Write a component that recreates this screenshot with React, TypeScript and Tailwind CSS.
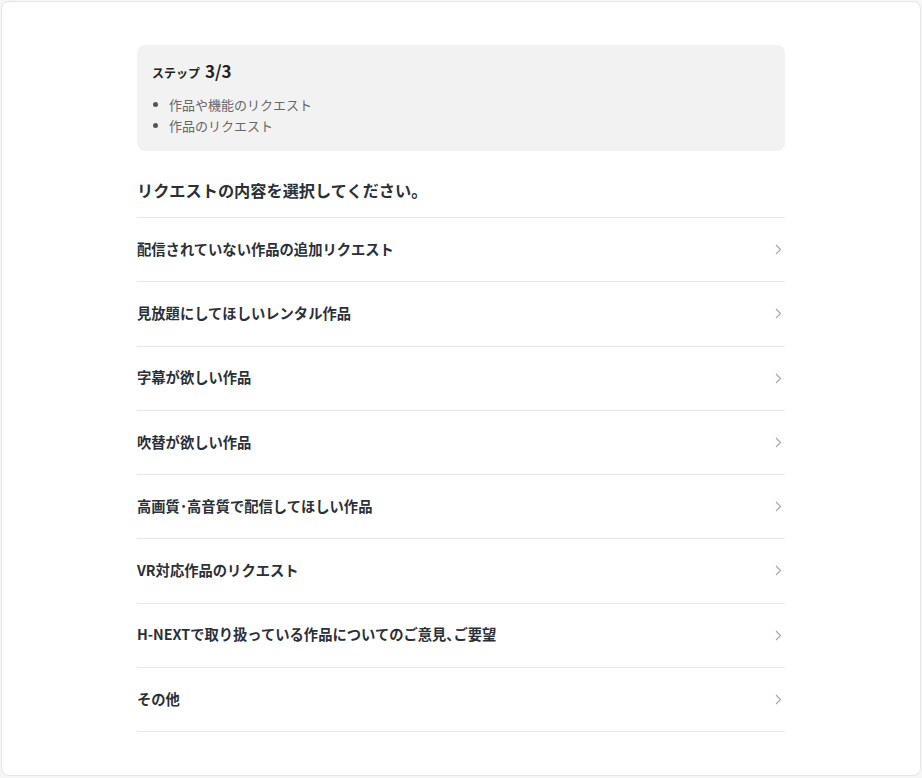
const items = [
  "配信されていない作品の追加リクエスト",
  "見放題にしてほしいレンタル作品",
  "字幕が欲しい作品",
  "吹替が欲しい作品",
  "高画質･高音質で配信してほしい作品",
  "VR対応作品のリクエスト",
  "H-NEXTで取り扱っている作品についてのご意見､ご要望",
  "その他",
];

function Chevron() {
  return (
    <svg width="8" height="11" viewBox="0 0 8 11" fill="none" className="shrink-0">
      <polyline points="2,1 6.5,5.5 2,10" stroke="#a8a8a8" strokeWidth="1.2" />
    </svg>
  );
}

export default function App() {
  return (
    <div
      className="min-h-[778px] bg-[#f6f6f6] p-px"
      style={{ fontFamily: '"Noto Sans CJK JP", "Noto Sans", sans-serif' }}
    >
      <div className="h-[775px] rounded-lg border border-[#e6e6e6] bg-white pt-[43px]">
        <div className="mx-auto w-[648px]">
          <div className="rounded-lg bg-[#f2f2f2] px-[15px] pb-[15px] pt-[13px]">
            <p className="flex items-baseline text-[12px] font-bold leading-[25px] text-[#222]">
              ステップ<span className="ml-[5px] text-[17px]">3/3</span>
            </p>
            <ul className="mt-[9px] text-[13px] leading-[21px] text-[#666]">
              <li className="flex items-center">
                <span className="ml-[1px] mr-[11px] h-[5px] w-[5px] rounded-full bg-[#555]" />
                作品や機能のリクエスト
              </li>
              <li className="flex items-center">
                <span className="ml-[1px] mr-[11px] h-[5px] w-[5px] rounded-full bg-[#555]" />
                作品のリクエスト
              </li>
            </ul>
          </div>

          <h2 className="mt-[27px] pb-[14px] text-[16.2px] font-bold leading-[25px] text-[#2a3038]">
            リクエストの内容を選択してください。
          </h2>

          <ul className="border-t border-[#e8e8e8]">
            {items.map((t) => (
              <li
                key={t}
                className="flex h-[64.25px] items-center justify-between border-b border-[#e8e8e8] pr-[3px]"
              >
                <span className="mb-[2px] text-[14.3px] font-bold text-[#2a3038]">{t}</span>
                <Chevron />
              </li>
            ))}
          </ul>
        </div>
      </div>
    </div>
  );
}
